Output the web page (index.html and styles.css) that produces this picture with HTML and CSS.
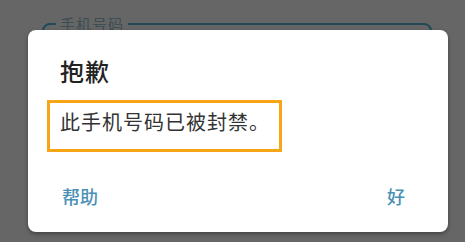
FILE: index.html
```html
<!DOCTYPE html>
<html lang="zh-CN">
<head>
  <meta charset="UTF-8">
  <title>抱歉</title>
  <link rel="stylesheet" href="styles.css">
</head>
<body>

<div class="page">
  <fieldset class="phone-field">
    <legend>手机号码</legend>
  </fieldset>
</div>

<div class="dialog">
  <h2 class="dialog-title">抱歉</h2>
  <div class="dialog-message">此手机号码已被封禁。</div>
  <div class="dialog-actions">
    <span class="dialog-btn">帮助</span>
    <span class="dialog-btn">好</span>
  </div>
</div>

</body>
</html>
```

FILE: styles.css
```css
body {
  margin: 0;
  background-color: #666666;
  font-family: "Noto Sans CJK SC", "Noto Sans", sans-serif;
  width: 465px;
  height: 242px;
  overflow: hidden;
}

.page {
  padding: 15px 33px 0 42px;
}

.phone-field {
  margin: 0;
  padding: 0 12px;
  height: 90px;
  border: 2px solid #1f4a56;
  border-radius: 8px;
}

.phone-field legend {
  padding: 0 4px;
  font-size: 15px;
  line-height: 18px;
  letter-spacing: 1px;
  color: #3c4d53;
}

/* Dialog liegt über dem Formular */
.dialog {
  position: absolute;
  left: 28px;
  top: 30px;
  width: 420px;
  height: 202px;
  box-sizing: border-box;
  padding: 25px 43px 0 32px;
  background-color: #ffffff;
  border-radius: 8px;
  box-shadow: 0 2px 4px rgba(0, 0, 0, 0.35);
}

.dialog-title {
  margin: 0;
  font-size: 24px;
  line-height: 32px;
  font-weight: 500;
  letter-spacing: 1px;
  color: #222222;
}

.dialog-message {
  display: inline-block;
  margin: 13px 0 0 -13px;
  padding: 5px 9px 13px 10px;
  border: 3px solid #f5a516;
  font-size: 20px;
  line-height: 28px;
  letter-spacing: 1px;
  color: #333333;
}

.dialog-actions {
  display: flex;
  justify-content: space-between;
  margin-top: 32px;
  padding-left: 2px;
}

.dialog-btn {
  font-size: 18px;
  line-height: 24px;
  font-weight: 500;
  color: #4b90b6;
}
```
